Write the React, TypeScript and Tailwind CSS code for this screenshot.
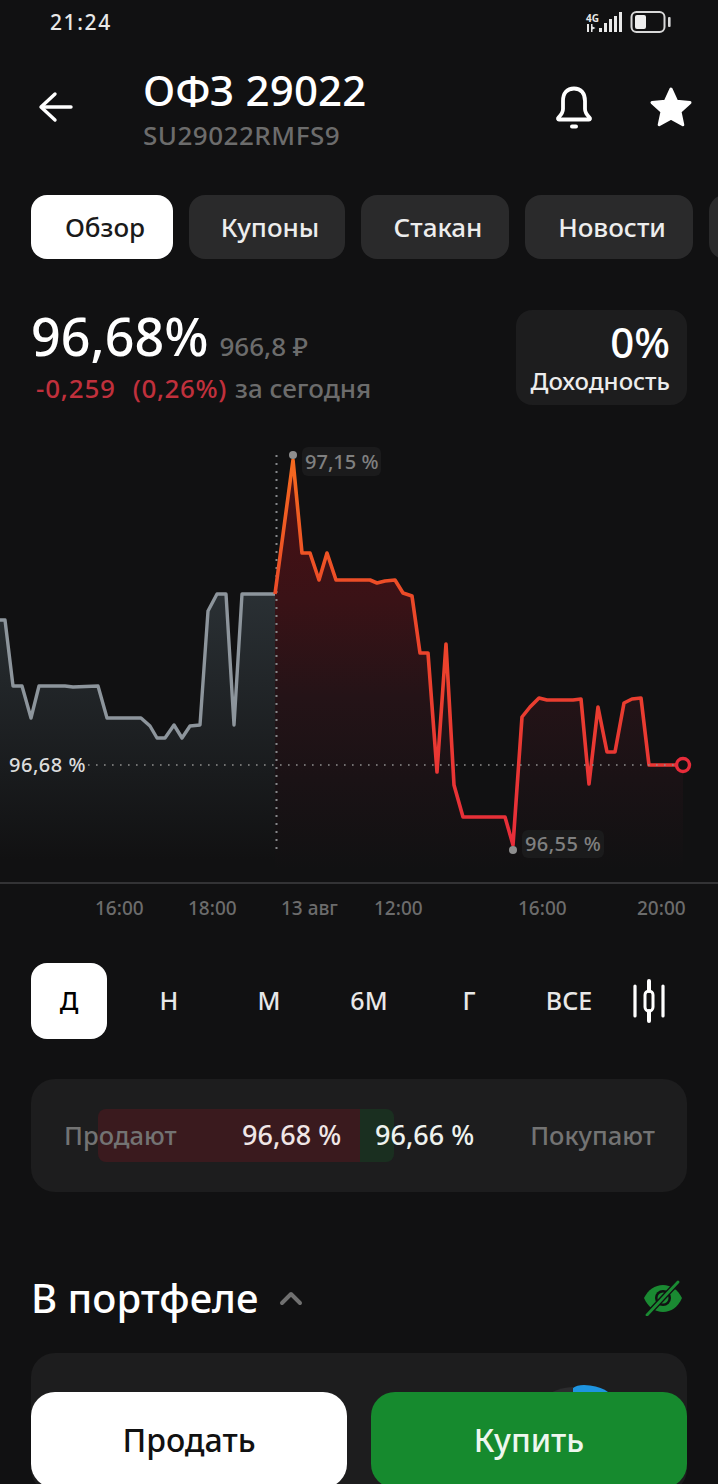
const grayLine =
  "0,620 5,620 13,686 22,686 31,718 39,686 65,686 73,687 98,686 107,718 141,718 150,726 157,738 165,738 174,725 182,738 190,726 200,725 208,611 217,594 226,594 234,725 242,594 275,594";
const redLine =
  "275,594 293,460 302,553 310,553 319,580 327,553 336,580 370,580 377,583 385,581 395,580 403,593 412,596 420,653 428,653 437,772 446,644 454,785 463,817 505,817 513,845 522,717 530,707 539,698 547,700 573,700 581,699 589,784 598,707 607,752 615,752 624,703 632,699 641,698 649,765 683,765";

const tabs = [
  { label: "Обзор", width: "w-[142px]", active: true },
  { label: "Купоны", width: "w-[156px]" },
  { label: "Стакан", width: "w-[148px]" },
  { label: "Новости", width: "w-[168px]" },
  { label: "", width: "w-[40px]" },
];

const ticks = [
  { label: "16:00", width: "w-[93px]" },
  { label: "18:00", width: "w-[93px]" },
  { label: "13 авг", width: "w-[93px]" },
  { label: "12:00", width: "w-[144px]" },
  { label: "16:00", width: "w-[119px]" },
  { label: "20:00", width: "w-[60px]" },
];

const ranges = ["Н", "М", "6М", "Г", "ВСЕ"];

function StatusBar() {
  return (
    <div className="flex h-[44px] items-center pl-[50px] text-[#e8e8e8]">
      <span className="mt-[1px] text-[21px] font-medium tracking-[1.6px]">21:24</span>
      <div className="ml-auto mr-[47px] flex items-center">
        <div className="flex flex-col items-start">
          <span className="text-[10px] font-bold leading-[12px]">4G</span>
          <svg width="12" height="8" viewBox="0 0 12 8" fill="#e8e8e8">
            <rect x="1" y="0" width="2" height="8" />
            <path d="M5 0 L5 8 L6.5 8 L6.5 5.5 L9.5 4 L6.5 2.5 L6.5 0 Z" />
          </svg>
        </div>
        <svg width="24" height="24" viewBox="0 0 24 24" fill="#e8e8e8">
          <rect x="0" y="18" width="3" height="4" />
          <rect x="5" y="13" width="3" height="9" />
          <rect x="10" y="9" width="3" height="13" />
          <rect x="15" y="6" width="3" height="16" />
          <rect x="20" y="2" width="3" height="20" />
        </svg>
        <svg width="41" height="24" viewBox="0 0 41 24" className="ml-[7px]">
          <rect x="1.5" y="2" width="33" height="20" rx="5" fill="none" stroke="#d8d8d8" strokeWidth="2" />
          <rect x="5" y="5" width="11" height="14" rx="2" fill="#eeeeee" />
          <rect x="38" y="7" width="2.6" height="10" rx="1" fill="#d8d8d8" />
        </svg>
      </div>
    </div>
  );
}

function Header() {
  return (
    <div className="flex h-[128px] items-start">
      <div className="ml-[38px] mt-[46px] h-[34px] w-[36px]">
        <svg width="36" height="34" viewBox="0 0 36 34" fill="none" stroke="#fff" strokeWidth="3.4" strokeLinecap="round" strokeLinejoin="round">
          <path d="M33 17H4" />
          <path d="M17 4L3 17L17 30" />
        </svg>
      </div>
      <div className="ml-[69px] mt-[22px] flex flex-col">
        <span className="text-[42px] font-medium leading-[48px] tracking-[0.2px] text-white">ОФЗ 29022</span>
        <span className="mt-[6px] text-[26px] font-medium leading-[30px] tracking-[0.5px] text-[#6c6c6c]">SU29022RMFS9</span>
      </div>
      <div className="ml-auto mr-[25px] mt-[40px] flex items-start gap-[56px]">
        <svg width="38" height="46" viewBox="0 0 38 46" fill="none" stroke="#fff" strokeWidth="3.8" strokeLinecap="round" strokeLinejoin="round">
          <path d="M8 25V17C8 9 12 4.5 19 4.5C26 4.5 30 9 30 17V25C30 29 32 31 34.5 33.5C35.5 34.5 35 35.5 34 35.5H4C3 35.5 2.5 34.5 3.5 33.5C6 31 8 29 8 25Z" />
          <path d="M17 42.5H21" strokeWidth="4" />
        </svg>
        <svg width="44" height="42" viewBox="0 0 44 42" fill="#fff" stroke="#fff" strokeWidth="3" strokeLinejoin="round" className="mt-[2px]">
          <path d="M22 3L27.6 15.2L41 16.6L31 25.6L33.8 38.8L22 32.1L10.2 38.8L13 25.6L3 16.6L16.4 15.2Z" />
        </svg>
      </div>
    </div>
  );
}

function Chart() {
  return (
    <div className="relative mt-[35px] h-[444px] border-b-[2px] border-[#333335]">
      <svg width="718" height="442" viewBox="0 440 718 442" className="block">
        <defs>
          <linearGradient id="stroke" gradientUnits="userSpaceOnUse" x1="0" y1="460" x2="0" y2="850">
            <stop offset="0" stopColor="#f4691f" />
            <stop offset="0.35" stopColor="#ec4a28" />
            <stop offset="1" stopColor="#e72c3a" />
          </linearGradient>
          <linearGradient id="redFill" gradientUnits="userSpaceOnUse" x1="0" y1="460" x2="0" y2="870">
            <stop offset="0" stopColor="#4a0f14" />
            <stop offset="0.34" stopColor="#3a1216" />
            <stop offset="0.58" stopColor="#241317" />
            <stop offset="0.78" stopColor="#1a1215" />
            <stop offset="1" stopColor="#111112" />
          </linearGradient>
          <linearGradient id="grayFill" gradientUnits="userSpaceOnUse" x1="0" y1="594" x2="0" y2="860">
            <stop offset="0" stopColor="#2a3034" />
            <stop offset="1" stopColor="#111112" />
          </linearGradient>
        </defs>
        <polygon points={`0,870 ${grayLine} 275,870`} fill="url(#grayFill)" />
        <polygon points={`${redLine} 683,870 275,870`} fill="url(#redFill)" />
        <line x1="276.5" y1="455" x2="276.5" y2="850" stroke="#85878a" strokeWidth="2" strokeDasharray="2 6" />
        <polyline points={grayLine} fill="none" stroke="#8d959c" strokeWidth="3.4" strokeLinejoin="round" />
        <polyline points={redLine} fill="none" stroke="url(#stroke)" strokeWidth="3.6" strokeLinejoin="round" />
        <line x1="88" y1="765" x2="676" y2="765" stroke="#8f8f8f" strokeWidth="1.6" strokeDasharray="1.6 6.4" />
        <circle cx="683" cy="765" r="6.5" fill="#111112" stroke="#e72c3a" strokeWidth="3.4" />
        <circle cx="293" cy="455" r="4" fill="#8e8e8e" />
        <circle cx="513" cy="850" r="4" fill="#8e8e8e" />
      </svg>
      <span className="absolute left-[302px] top-[7px] rounded-[6px] bg-[#1b1b1c] px-[3px] text-[20px] font-medium leading-[29px] text-[#808080]">97,15 %</span>
      <span className="absolute left-[522px] top-[390px] rounded-[6px] bg-[#1b1b1c] px-[3px] text-[20px] font-medium leading-[28px] tracking-[0.4px] text-[#808080]">96,55 %</span>
      <span className="absolute left-[9px] top-[311px] text-[20px] font-medium leading-[28px] tracking-[0.5px] text-[#dcdcdc]">96,68 %</span>
    </div>
  );
}

function RangeRow() {
  return (
    <div className="mt-[31px] flex h-[76px] items-center gap-[24px] pl-[31px]">
      <div className="flex h-[76px] w-[76px] items-center justify-center rounded-[16px] bg-white text-[25px] font-medium text-black">Д</div>
      {ranges.map((range) => (
        <div key={range} className="flex h-[76px] w-[76px] items-center justify-center text-[25px] font-medium text-[#e8e8e8]">
          {range}
        </div>
      ))}
      <svg width="34" height="44" viewBox="0 0 34 44" fill="none" stroke="#fff" strokeLinecap="round" className="ml-[1px]">
        <path d="M3 7V37M31 7V37" strokeWidth="3.2" />
        <path d="M17 2V12M17 32V42" strokeWidth="4" />
        <rect x="13" y="12" width="8" height="20" rx="4" strokeWidth="3" />
      </svg>
    </div>
  );
}

function QuotePanel() {
  return (
    <div className="relative mx-[31px] mt-[40px] flex h-[113px] items-center rounded-[24px] bg-[#1d1d1e] text-[25.5px] font-medium">
      <div className="absolute left-[67px] top-[30px] flex h-[53px] w-[296px] overflow-hidden rounded-[8px]">
        <div className="w-[262px] bg-[#3a1a1e]" />
        <div className="w-[34px] bg-[#1a2f20]" />
      </div>
      <span className="relative ml-[33px] w-[178px] text-[#737373]">Продают</span>
      <span className="relative w-[133px] text-[27px] text-[#f0e6e6]">96,68 %</span>
      <span className="relative text-[27px] text-[#eef2ee]">96,66 %</span>
      <span className="relative ml-auto mr-[32px] text-[#737373]">Покупают</span>
    </div>
  );
}

function Portfolio() {
  return (
    <>
      <div className="mt-[81px] flex h-[50px] items-center pl-[31px] pr-[33px]">
        <span className="text-[40px] font-medium leading-[50px] text-white">В портфеле</span>
        <svg width="24" height="16" viewBox="0 0 24 16" fill="none" stroke="#707070" strokeWidth="4" strokeLinecap="round" strokeLinejoin="round" className="ml-[21px]">
          <path d="M3 13L12 4L21 13" />
        </svg>
        <svg width="40" height="36" viewBox="0 0 40 36" fill="none" className="ml-auto mr-[2px]">
          <path d="M1 18C5 10 12 5 20 5C28 5 35 10 39 18C35 27 28 32 20 32C12 32 5 27 1 18Z" fill="#1a8a32" />
          <circle cx="20" cy="18" r="8" fill="#111112" />
          <circle cx="20" cy="18" r="5.5" fill="#1a8a32" />
          <path d="M4 35L35 2" stroke="#111112" strokeWidth="5.5" />
          <path d="M4 35L35 2" stroke="#1a8a32" strokeWidth="2.8" strokeLinecap="round" />
        </svg>
      </div>
      <div className="relative mx-[31px] mt-[30px] h-[140px] overflow-hidden rounded-[24px] bg-[#1d1d1e]">
        <svg width="60" height="10" viewBox="0 0 60 10" className="absolute left-[519px] top-[32px]">
          <path d="M0 8Q12 2 23 2L23 10L0 10Z" fill="#2c2c2e" />
          <path d="M23 3Q28 -1 40 0.5Q52 2 58 7L58 10L23 10Z" fill="#1e94e0" />
        </svg>
      </div>
    </>
  );
}

export default function App() {
  return (
    <div className="relative h-[1484px] w-[718px] overflow-hidden bg-[#111112] font-['Noto_Sans',sans-serif]">
      <StatusBar />
      <Header />

      <div className="mt-[23px] flex h-[64px] gap-[16px] pl-[31px]">
        {tabs.map((tab, i) => (
          <div
            key={i}
            className={
              tab.active
                ? `flex shrink-0 items-center justify-center rounded-[16px] bg-white pl-[6px] text-[26px] font-medium text-[#1a1a1a] ${tab.width}`
                : `flex shrink-0 items-center justify-center rounded-[16px] bg-[#2a2a2b] pl-[6px] text-[26px] font-medium text-[#ededed] ${tab.width}`
            }
          >
            {tab.label}
          </div>
        ))}
      </div>

      <div className="mt-[51px] flex h-[95px] items-start justify-between px-[31px]">
        <div className="flex flex-col">
          <div className="flex items-baseline">
            <span className="text-[52px] font-medium leading-[52px] text-white">96,68%</span>
            <span className="ml-[11px] text-[26px] font-medium text-[#6c6c6c]">966,8 ₽</span>
          </div>
          <div className="ml-[5px] mt-[6px] flex text-[26px] font-medium leading-[33px]">
            <span className="tracking-[0.8px] text-[#c0303c]">-0,259</span>
            <span className="ml-[17px] tracking-[0.6px] text-[#c0303c]">(0,26%)</span>
            <span className="ml-[8px] text-[#6c6c6c]">за сегодня</span>
          </div>
        </div>
        <div className="flex h-[95px] w-[171px] flex-col items-end rounded-[16px] bg-[#1d1d1e] pr-[17px] pt-[8px]">
          <span className="text-[42px] font-medium leading-[48px] text-white">0%</span>
          <span className="text-[24px] font-medium leading-[30px] text-[#ececec]">Доходность</span>
        </div>
      </div>

      <Chart />

      <div className="flex h-[48px] items-center pl-[95px] text-[19px] font-medium text-[#6c6c6c]">
        {ticks.map((tick, i) => (
          <span key={i} className={`shrink-0 ${tick.width}`}>
            {tick.label}
          </span>
        ))}
      </div>

      <RangeRow />
      <QuotePanel />
      <Portfolio />

      <div className="absolute bottom-[-4px] left-[31px] right-[31px] flex gap-[24px]">
        <button className="h-[96px] flex-1 rounded-[24px] bg-white text-[32px] font-medium text-[#111]">Продать</button>
        <button className="h-[96px] flex-1 rounded-[24px] bg-[#168a2e] text-[32px] font-medium text-[#eef7ee]">Купить</button>
      </div>
    </div>
  );
}
